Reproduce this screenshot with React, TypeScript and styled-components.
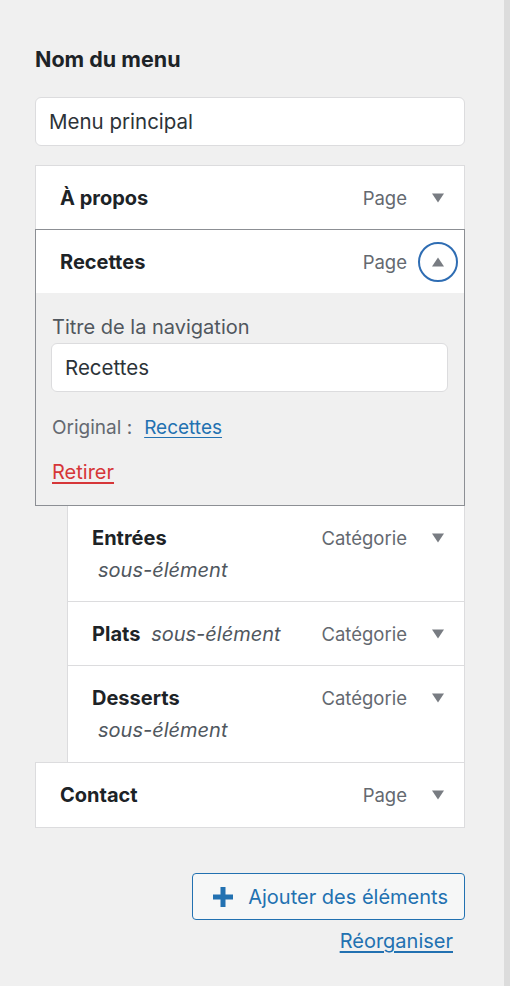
import React from "react";
import styled, { createGlobalStyle } from "styled-components";

const Global = createGlobalStyle`
  html, body { margin: 0; padding: 0; background: #f0f0f0; }
  body { font-family: Inter, "Noto Sans", "Liberation Sans", sans-serif; -webkit-font-smoothing: antialiased; }
  * { box-sizing: border-box; }
`;

const Page = styled.div`
  display: flex;
  min-height: 986px;
`;

const Main = styled.div`
  flex: 1;
  padding: 45px 39px 0 35px;
`;

const Edge = styled.div`
  width: 6px;
  background: #dcdcdc;
`;

const Heading = styled.h2`
  margin: 0;
  font-size: 21.5px;
  line-height: 28px;
  font-weight: 700;
  color: #1d2327;
`;

const TextInput = styled.input`
  display: block;
  width: 100%;
  height: 49px;
  margin: 24px 0 0;
  padding: 0 13px;
  border: 1px solid #dcdcde;
  border-radius: 6px;
  background: #fff;
  font: inherit;
  font-size: 20.5px;
  color: #2c3338;
  outline: none;
`;

const List = styled.ul`
  list-style: none;
  margin: 19px 0 0;
  padding: 0;
`;

const Item = styled.li<{ $depth?: number; $open?: boolean }>`
  margin: -1px 0 0 ${(p) => (p.$depth ? 32 : 0)}px;
  border: 1px solid ${(p) => (p.$open ? "#8c8f94" : "#dcdcde")};
  background: #fff;
  position: relative;
  z-index: ${(p) => (p.$open ? 1 : 0)};
  &:first-child { margin-top: 0; }
`;

const Bar = styled.div<{ $tall?: boolean }>`
  display: flex;
  align-items: flex-start;
  padding: 16px 20px ${(p) => (p.$tall ? 16 : 15)}px 24px;
`;

const Title = styled.div`
  flex: 1;
  min-width: 0;
  margin-right: 30px;
  font-size: 20px;
  line-height: 32px;
  font-weight: 700;
  color: #1d2327;
`;

const SubNote = styled.span`
  margin-left: 6px;
  font-weight: 400;
  font-style: italic;
  color: #50575e;
  white-space: nowrap;
`;

const Controls = styled.div`
  display: flex;
  align-items: center;
  height: 32px;
`;

const TypeLabel = styled.span`
  font-size: 18.5px;
  color: #646970;
`;

const Toggle = styled.button<{ $open?: boolean }>`
  display: flex;
  align-items: center;
  justify-content: center;
  width: 40px;
  height: 40px;
  margin: 0 -14px 0 11px;
  padding: 0;
  border-radius: 50%;
  border: 2.5px solid ${(p) => (p.$open ? "#2f6db3" : "transparent")};
  background: transparent;
  cursor: pointer;
`;

const Settings = styled.div`
  background: #f0f0f0;
  padding: 22px 16px 21px 15px;
`;

const FieldLabel = styled.label`
  display: block;
  font-size: 20px;
  line-height: 24px;
  color: #50575e;
  padding-left: 1px;
`;

const FieldInput = styled(TextInput)`
  margin-top: 4px;
`;

const Original = styled.p`
  margin: 24px 0 0 1px;
  font-size: 19px;
  line-height: 24px;
  color: #646970;
`;

const Link = styled.a<{ $danger?: boolean }>`
  color: ${(p) => (p.$danger ? "#d63638" : "#2271b1")};
  text-decoration: underline;
  text-underline-offset: 3px;
  cursor: pointer;
`;

const OriginalLink = styled(Link)`
  margin-left: 12px;
`;

const Remove = styled.div`
  margin-top: 20px;
  padding-left: 1px;
  font-size: 20px;
  line-height: 24px;
`;

const Footer = styled.div`
  display: flex;
  flex-direction: column;
  align-items: flex-end;
  margin-top: 45px;
`;

const AddButton = styled.button`
  display: flex;
  align-items: center;
  gap: 14px;
  height: 47px;
  padding: 0 16px 0 19px;
  border: 1px solid #2271b1;
  border-radius: 4px;
  background: #f6f7f7;
  font: inherit;
  font-size: 20px;
  color: #2271b1;
  cursor: pointer;
`;

const Reorder = styled(Link)`
  margin: 8px 12px 0 0;
  font-size: 20px;
  line-height: 26px;
`;

const Caret = ({ up }: { up?: boolean }) => (
  <svg width="12" height="10" viewBox="0 0 12 10" aria-hidden="true">
    <path d={up ? "M0 9.5 L6 0.5 L12 9.5 Z" : "M0 0.5 L12 0.5 L6 9.5 Z"} fill="#787c82" />
  </svg>
);

const Plus = () => (
  <svg width="22" height="22" viewBox="0 0 22 22" aria-hidden="true">
    <path d="M11 1 V21 M1 11 H21" stroke="#2271b1" strokeWidth="5" />
  </svg>
);

type Entry = { title: string; type: string; depth?: number; open?: boolean };

const entries: Entry[] = [
  { title: "À propos", type: "Page" },
  { title: "Recettes", type: "Page", open: true },
  { title: "Entrées", type: "Catégorie", depth: 1 },
  { title: "Plats", type: "Catégorie", depth: 1 },
  { title: "Desserts", type: "Catégorie", depth: 1 },
  { title: "Contact", type: "Page" },
];

export default function App() {
  return (
    <>
      <Global />
      <Page>
        <Main>
          <Heading>Nom du menu</Heading>
          <TextInput defaultValue="Menu principal" aria-label="Nom du menu" />
          <List>
            {entries.map((e, i) => (
              <Item key={e.title} $depth={e.depth} $open={e.open}>
                <Bar $tall={i === entries.length - 1 || e.title === "Desserts"}>
                  <Title>
                    {e.title}
                    {e.depth ? (
                      <>
                        {" "}
                        <SubNote>sous-élément</SubNote>
                      </>
                    ) : null}
                  </Title>
                  <Controls>
                    <TypeLabel>{e.type}</TypeLabel>
                    <Toggle $open={e.open} aria-label="Modifier">
                      <Caret up={e.open} />
                    </Toggle>
                  </Controls>
                </Bar>
                {e.open && (
                  <Settings>
                    <FieldLabel>Titre de la navigation</FieldLabel>
                    <FieldInput defaultValue={e.title} aria-label="Titre de la navigation" />
                    <Original>
                      Original :<OriginalLink>{e.title}</OriginalLink>
                    </Original>
                    <Remove>
                      <Link $danger>Retirer</Link>
                    </Remove>
                  </Settings>
                )}
              </Item>
            ))}
          </List>
          <Footer>
            <AddButton>
              <Plus />
              Ajouter des éléments
            </AddButton>
            <Reorder>Réorganiser</Reorder>
          </Footer>
        </Main>
        <Edge />
      </Page>
    </>
  );
}
